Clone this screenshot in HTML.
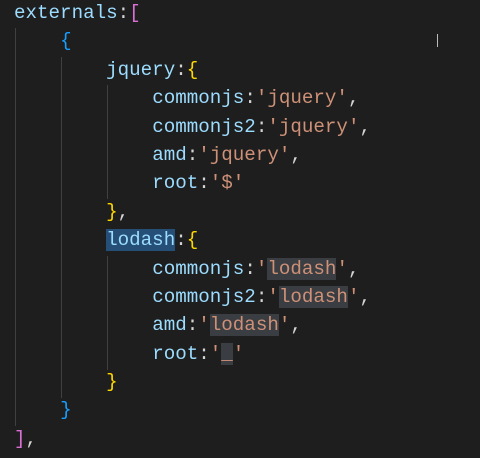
<!DOCTYPE html>
<html><head><style>
body{margin:0;background:#1e1e1e;width:480px;height:458px;overflow:hidden;position:relative}
.c{position:absolute;left:14px;top:-1px;font-family:"Liberation Mono",monospace;font-size:19.2px;line-height:28.4px;color:#d4d4d4}
.l{height:28.4px;white-space:pre}
.k{color:#9cdcfe}.s{color:#ce9178}.p{color:#da70d6}.b{color:#179fff}.y{color:#ffd700}
.h{background:#3a3d41}.sel{background:#264f78}
.g{position:absolute;width:1px;background:#404040}
</style></head><body>
<div class="g" style="left:15px;top:28px;height:398px"></div>
<div class="g" style="left:61px;top:57px;height:341px"></div>
<div class="g" style="left:107px;top:85px;height:114px"></div>
<div class="g" style="left:107px;top:256px;height:114px"></div>
<div class="c"><div class="l"><span class="k">externals</span>:<span class="p">[</span></div><div class="l">    <span class="b">{</span></div><div class="l">        <span class="k">jquery</span>:<span class="y">{</span></div><div class="l">            <span class="k">commonjs</span>:<span class="s">'jquery'</span>,</div><div class="l">            <span class="k">commonjs2</span>:<span class="s">'jquery'</span>,</div><div class="l">            <span class="k">amd</span>:<span class="s">'jquery'</span>,</div><div class="l">            <span class="k">root</span>:<span class="s">'$'</span></div><div class="l">        <span class="y">}</span>,</div><div class="l">        <span class="k sel">lodash</span>:<span class="y">{</span></div><div class="l">            <span class="k">commonjs</span>:<span class="s">'<span class="h">lodash</span>'</span>,</div><div class="l">            <span class="k">commonjs2</span>:<span class="s">'<span class="h">lodash</span>'</span>,</div><div class="l">            <span class="k">amd</span>:<span class="s">'<span class="h">lodash</span>'</span>,</div><div class="l">            <span class="k">root</span>:<span class="s">'<span class="h">_</span>'</span></div><div class="l">        <span class="y">}</span></div><div class="l">    <span class="b">}</span></div><div class="l"><span class="p">]</span>,</div></div>
<div style="position:absolute;left:437px;top:34px;width:1px;height:13px;background:#bbb"></div>
</body></html>
